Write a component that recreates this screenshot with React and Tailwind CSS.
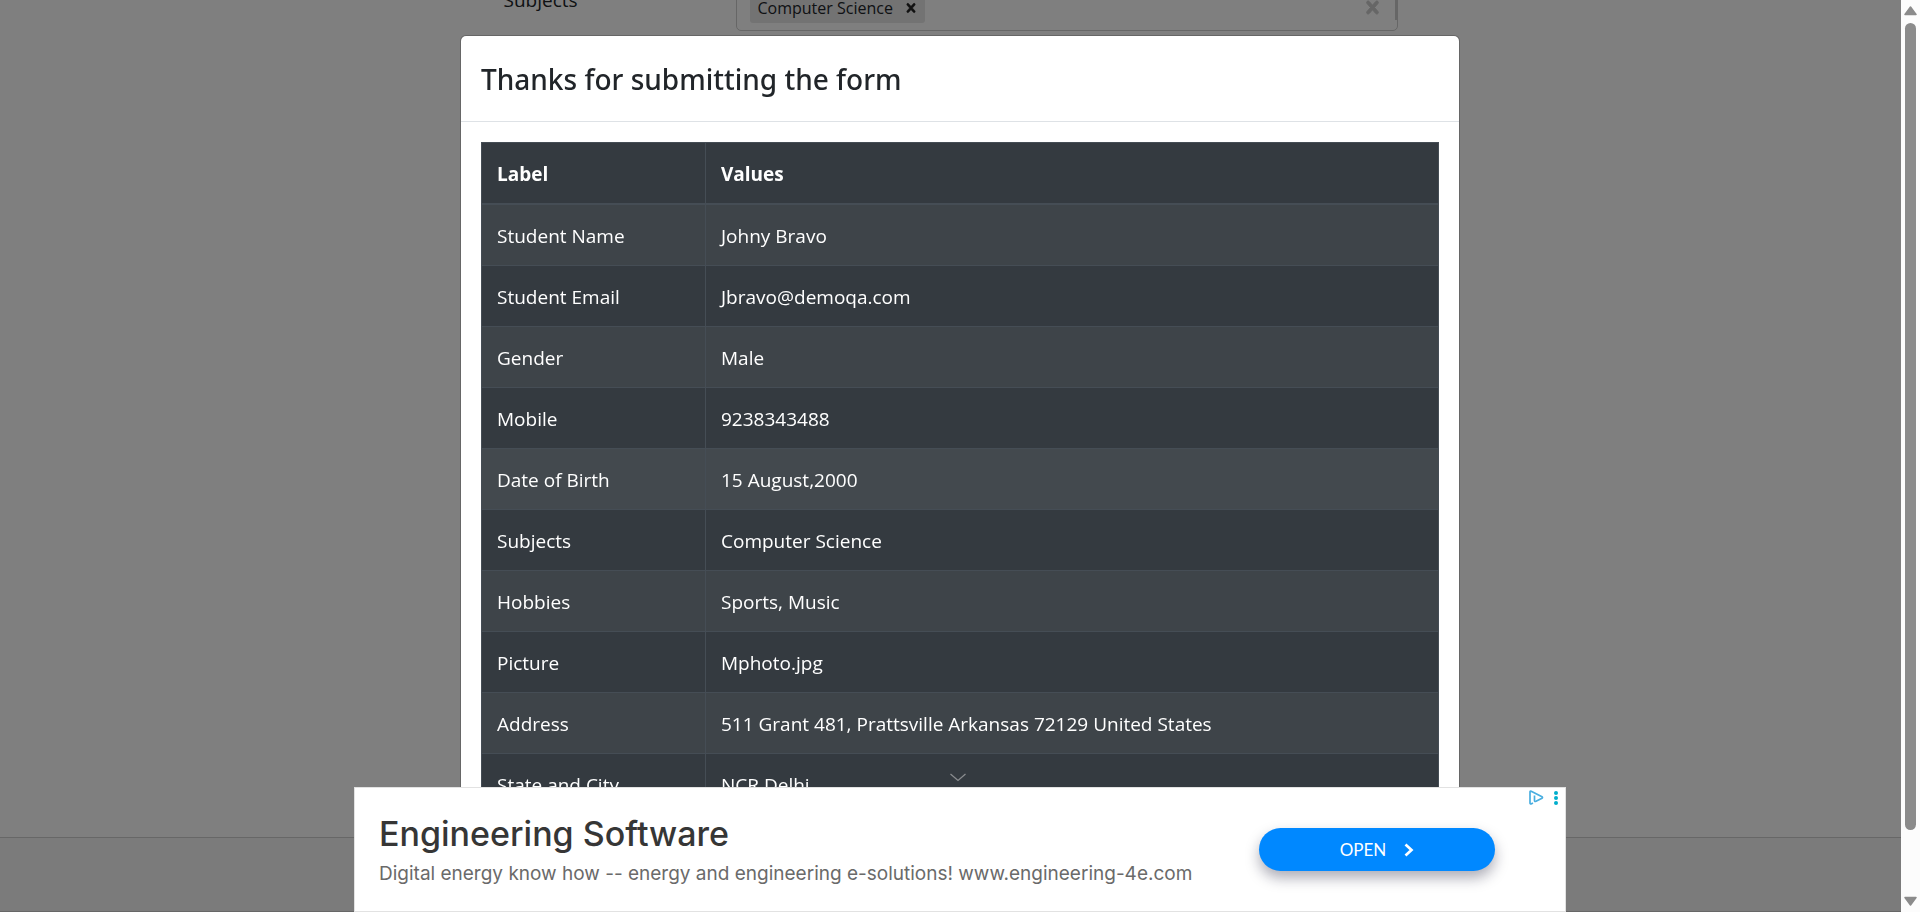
import React from "react";

const rows = [
  ["Student Name", "Johny Bravo"],
  ["Student Email", "Jbravo@demoqa.com"],
  ["Gender", "Male"],
  ["Mobile", "9238343488"],
  ["Date of Birth", "15 August,2000"],
  ["Subjects", "Computer Science"],
  ["Hobbies", "Sports, Music"],
  ["Picture", "Mphoto.jpg"],
  ["Address", "511 Grant 481, Prattsville Arkansas 72129 United States"],
  ["State and City", "NCR Delhi"],
];

const CROSS =
  "M14.348 14.849c-0.469 0.469-1.229 0.469-1.697 0l-2.651-3.030-2.651 3.029c-0.469 0.469-1.229 0.469-1.697 0-0.469-0.469-0.469-1.229 0-1.697l2.758-3.15-2.759-3.152c-0.469-0.469-0.469-1.228 0-1.697s1.228-0.469 1.697 0l2.652 3.031 2.651-3.031c0.469-0.469 1.228-0.469 1.697 0s0.469 1.229 0 1.697l-2.758 3.152 2.758 3.15c0.469 0.469 0.469 1.229 0 1.698z";

function FormPage() {
  return (
    <main className="flex min-h-screen flex-col bg-white pr-[19px]">
      <div className="mx-auto -mt-[21px] flex w-full max-w-[894px] items-start">
        <div className="w-[232px] shrink-0 pt-1.5 text-[19px] leading-[30px]">Subjects</div>
        <div className="flex h-[52px] grow items-stretch rounded-[5px] border border-[#cccccc] pl-[13px]">
          <div className="mb-[7px] flex h-[31px] items-center self-end rounded-[3px] bg-[#e6e6e6] pl-2">
            <span className="text-base leading-5">Computer Science</span>
            <button type="button" aria-label="Remove Computer Science" className="flex w-8 justify-center pl-1">
              <svg viewBox="0 0 20 20" className="size-[18px] fill-[#222222] stroke-[#222222]"><path d={CROSS} strokeWidth=".6" /></svg>
            </button>
          </div>
          <button type="button" aria-label="Clear subjects" className="mr-[9px] ml-auto flex w-[26px] items-center justify-center pt-[5px]">
            <svg viewBox="0 0 20 20" className="size-[25px] fill-[#cccccc] stroke-[#cccccc]"><path d={CROSS} strokeWidth=".8" /></svg>
          </button>
          <span className="my-[10px] w-[2px] bg-[#cccccc]" />
        </div>
      </div>
      <footer className="mt-auto h-[75px] border-y border-[#cfcfcf] bg-[#f6f6f6]" />
    </main>
  );
}

function ResultTable() {
  return (
    <table className="w-full border-collapse border border-[#454d55] bg-[#343a40] text-left text-[19px] leading-[30px] text-white">
      <thead>
        <tr>
          <th className="w-[224px] border border-b-2 border-[#454d55] px-[15px] pt-4 pb-[14px] font-bold">Label</th>
          <th className="border border-b-2 border-[#454d55] px-[15px] pt-4 pb-[14px] font-bold">Values</th>
        </tr>
      </thead>
      <tbody>
        {rows.map(([label, value]) => (
          <tr
            key={label}
            className={label === "Date of Birth" ? "bg-[#43494e]" : "odd:bg-[#3e4449]"}
          >
            <td className="border border-[#454d55] px-[15px] pt-4 pb-[14px]">{label}</td>
            <td className="border border-[#454d55] px-[15px] pt-4 pb-[14px]">{value}</td>
          </tr>
        ))}
      </tbody>
    </table>
  );
}

function Dialog() {
  return (
    <div className="fixed inset-0 overflow-hidden bg-black/50 pt-[35px]">
      <section
        role="dialog"
        aria-labelledby="dialog-title"
        className="mx-auto w-full max-w-[1000px] rounded-[6px] border border-black/20 bg-white bg-clip-padding"
      >
        <header className="border-b border-[#dee2e6] px-5 pt-[21px] pb-[19px]">
          <h1 id="dialog-title" className="font-['Noto_Sans','Open_Sans',sans-serif] text-[28px] leading-[45px] font-medium">
            Thanks for submitting the form
          </h1>
        </header>
        <div className="p-5">
          <ResultTable />
        </div>
      </section>
    </div>
  );
}

function AdBanner() {
  return (
    <aside className="fixed inset-x-0 bottom-0 mx-auto flex w-full max-w-[1212px] flex-col items-center">
      <button type="button" aria-label="Hide advertisement" className="mr-1 mb-[5px] text-[#8a8c8f]">
        <svg viewBox="0 0 16 9" className="h-[9px] w-4 fill-none stroke-current"><path d="M.5 1 8 7.500 15.500 1" strokeWidth="1.300" /></svg>
      </button>
      <div className="relative flex h-[125px] w-full items-center border border-[#e2e2e2] bg-white pr-[70px] pl-6 font-[Inter,sans-serif]">
        <div className="grow pt-0.5">
          <h2 className="text-[34px] leading-[44px] font-medium text-[#363636]">Engineering Software</h2>
          <p className="mt-0.5 text-[19px] leading-8 text-[#6a6a6a]">
            Digital energy know how -- energy and engineering e-solutions! www.engineering-4e.com
          </p>
        </div>
        <a
          href="#open"
          className="flex h-[43px] w-[236px] shrink-0 items-center justify-center gap-[18px] rounded-full bg-[#0088ff] font-[Lato,sans-serif] text-[17px] text-white shadow-[0_7px_14px_rgba(20,20,50,0.350)]"
        >
          OPEN
          <svg viewBox="0 0 10 14" className="h-[14px] w-[10px] fill-none stroke-current"><path d="M1.500 1.500 7.500 7 1.500 12.500" strokeWidth="2.700" /></svg>
        </a>
        <div className="absolute top-[2px] right-[7px] flex items-center gap-[10px]">
          <svg viewBox="0 0 15 15" className="size-[15px] fill-none stroke-[#4aaee0]"><path d="M4 13 2 14Q1 14 1 13V2Q1 .8 2.200 1.200L13 6.800Q14 7.500 13 8.200L7 11.300Q5.500 12 5.500 10.500V5.500" strokeWidth="1.700" strokeLinejoin="round" /></svg>
          <svg viewBox="0 0 4 14" className="h-[14px] w-1 fill-[#00aecd]"><circle cx="2" cy="2" r="2" /><circle cx="2" cy="7" r="2" /><circle cx="2" cy="12" r="2" /></svg>
        </div>
      </div>
    </aside>
  );
}

function ScrollRail() {
  return (
    <div aria-hidden="true" className="fixed inset-y-0 right-0 flex w-[19px] flex-col items-center bg-[#fcfcfc] py-[5px]">
      <svg viewBox="0 0 13 11" className="h-[11px] w-[13px] fill-[#8b8b8b] stroke-[#8b8b8b]"><path d="M6.500 2 12 9.500H1z" strokeLinejoin="round" strokeWidth="1.500" /></svg>
      <div className="mt-[7px] w-[11px] grow rounded-full bg-[#8b8b8b]" />
      <svg viewBox="0 0 13 11" className="mt-[66px] h-[11px] w-[13px] fill-[#8b8b8b] stroke-[#8b8b8b]"><path d="M6.500 9 12 1.500H1z" strokeLinejoin="round" strokeWidth="1.500" /></svg>
    </div>
  );
}

export default function App() {
  return (
    <div className="font-['Open_Sans',sans-serif] text-[#212529]">
      <FormPage />
      <Dialog />
      <AdBanner />
      <ScrollRail />
    </div>
  );
}
